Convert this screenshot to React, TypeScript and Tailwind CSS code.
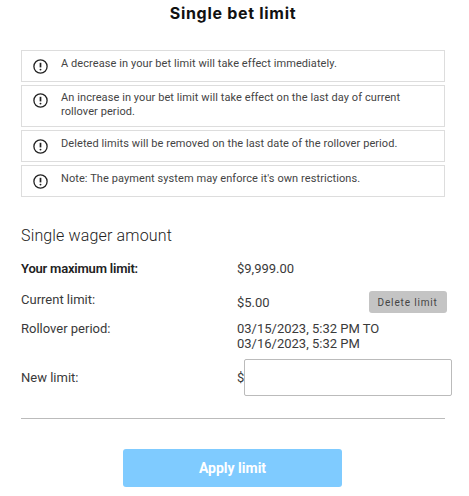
import { useState } from 'react'

const NOTES = [
  { text: 'A decrease in your bet limit will take effect immediately.', box: 'h-[32px] pt-[6px]' },
  { text: 'An increase in your bet limit will take effect on the last day of current rollover period.', box: 'h-[42px] pt-[5px]' },
  { text: 'Deleted limits will be removed on the last date of the rollover period.', box: 'h-[32px] pt-[6px]' },
  { text: "Note: The payment system may enforce it's own restrictions.", box: 'h-[32px] pt-[6px]' },
]

function AlertIcon() {
  return (
    <svg className="w-[15px] h-[15px] shrink-0 mt-[2px]" viewBox="0 0 15 15" fill="none">
      <circle cx="7.5" cy="7.5" r="6.6" stroke="#222" strokeWidth="1.3" />
      <path d="M7.5 3.8v4.6" stroke="#222" strokeWidth="1.7" />
      <circle cx="7.5" cy="10.6" r="0.95" fill="#222" />
    </svg>
  )
}

export default function App() {
  const [limit, setLimit] = useState('')

  return (
    <div className="w-[469px] h-[496px] overflow-hidden bg-white text-[#3a3a3a] font-['Roboto',sans-serif]">
      <h1 className="pt-[3px] h-[50px] text-center text-[16px] leading-[20px] tracking-[0.7px] font-bold text-[#111] font-['Inter',sans-serif] pr-[3px]">
        Single bet limit
      </h1>

      <div className="mx-[21px] w-[424px] flex flex-col gap-[3px]">
        {NOTES.map(n => (
          <div key={n.text} className={`flex gap-[13px] pl-[11px] pr-[30px] border border-[#ddd] ${n.box}`}>
            <AlertIcon />
            <p className="text-[11px] leading-[14px] tracking-[0.08px] text-[#444]">{n.text}</p>
          </div>
        ))}
      </div>

      <h2 className="ml-[21px] mt-[29px] text-[16px] leading-[20px] font-light tracking-[0.15px] text-[#222]">Single wager amount</h2>

      <div className="ml-[21px] mt-[15px] text-[13px] leading-[15px]">
        <div className="flex h-[31px]">
          <span className="w-[216px] font-semibold tracking-[-0.2px] text-[#222]">Your maximum limit:</span>
          <span>$9,999.00</span>
        </div>
        <div className="flex items-start h-[29px]">
          <span className="w-[216px]">Current limit:</span>
          <span className="mt-[3px]">$5.00</span>
          <button className="ml-[99px] -mt-[1px] w-[78px] h-[22px] rounded-[3px] bg-[#c4c4c4] text-[10px] tracking-[0.85px] text-[#444]">
            Delete limit
          </button>
        </div>
        <div className="flex h-[29px]">
          <span className="w-[216px]">Rollover period:</span>
          <span className="w-[160px]">03/15/2023, 5:32 PM TO 03/16/2023, 5:32 PM</span>
        </div>
        <div className="flex items-center h-[37px] mt-[9px]">
          <span className="w-[216px]">New limit:</span>
          <span className="w-[7px]">$</span>
          <input
            value={limit}
            onChange={e => setLimit(e.target.value)}
            className="w-[208px] h-[37px] rounded-[2px] border border-[#bbb] bg-white outline-none px-2"
          />
        </div>
      </div>

      <hr className="mx-[21px] mt-[22px] w-[424px] border-0 border-t border-[#bbb]" />

      <div className="mt-[30px] flex justify-center pr-[4px]">
        <button className="w-[219px] h-[38px] rounded-[3px] bg-[#7fcbff] text-white text-[14px] font-bold">Apply limit</button>
      </div>
    </div>
  )
}
